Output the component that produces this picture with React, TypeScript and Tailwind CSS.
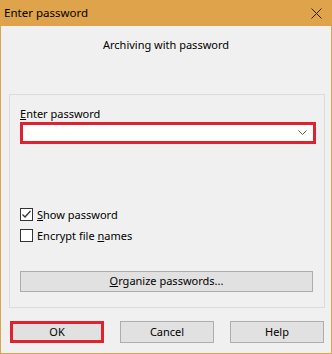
import React from 'react';

const font = 'font-["Segoe_UI","Noto_Sans","Liberation_Sans",sans-serif]';

const CheckRow = ({ checked, children }: { checked?: boolean; children: React.ReactNode }) => (
  <div className="flex items-center h-[13px]">
    <div className="w-[13px] h-[13px] border border-[#333333] bg-white flex items-center justify-center">
      {checked && (
        <svg width="11" height="11" viewBox="0 0 11 11">
          <path d="M1.5 5.5 L4 8 L9.5 2" fill="none" stroke="#333333" strokeWidth="1.3" />
        </svg>
      )}
    </div>
    <span className="ml-[4px] text-[11px] leading-[16px] text-black">{children}</span>
  </div>
);

const Btn = ({ children, red }: { children: React.ReactNode; red?: boolean }) => (
  <div
    className={`w-[94px] h-[22px] flex items-center justify-center bg-[#e1e1e1] text-[11px] text-black ${
      red ? 'border-[3px] border-[#e0212f]' : 'border border-[#adadad]'
    }`}
  >
    {children}
  </div>
);

export default function App() {
  return (
    <div className={`w-[332px] h-[354px] flex flex-col ${font}`}>
      {/* Title bar */}
      <div className="h-[26px] bg-[#dea34b] flex items-center justify-between pl-[4px] pr-[10px]">
        <span className="text-[11.5px] text-black leading-[16px]">Enter password</span>
        <svg width="11" height="11" viewBox="0 0 11 11">
          <path d="M0.5 0.5 L10.5 10.5 M10.5 0.5 L0.5 10.5" stroke="#222222" strokeWidth="1" />
        </svg>
      </div>

      {/* Body */}
      <div className="flex-1 bg-[#f0f0f0] border-x border-b border-[#dea34b] flex flex-col">
        <div className="pt-[11px] text-center text-[11px] leading-[16px] text-black">Archiving with password</div>

        {/* Group box */}
        <div className="mt-[41px] ml-[8px] w-[316px] h-[214px] border border-[#dcdcdc] flex flex-col pl-[10px] pr-[8px]">
          <div className="mt-[11px] text-[11px] leading-[16px] text-black">
            <u>E</u>nter password
          </div>
          <div className="w-[296px] h-[22px] border-[3px] border-[#e0212f] bg-white flex items-center justify-end pr-[6px]">
            <svg width="9" height="6" viewBox="0 0 9 6">
              <path d="M0.5 0.5 L4.5 4.5 L8.5 0.5" fill="none" stroke="#555555" strokeWidth="1" />
            </svg>
          </div>

          <div className="mt-[64px] flex flex-col gap-[8px]">
            <CheckRow checked>
              <u>S</u>how password
            </CheckRow>
            <CheckRow>
              Encrypt file <u>n</u>ames
            </CheckRow>
          </div>

          <div className="mt-[29px] w-[293px] h-[21px] bg-[#e1e1e1] border border-[#adadad] flex items-center justify-center text-[11px] text-black">
            <span>
              <u>O</u>rganize passwords...
            </span>
          </div>
        </div>

        {/* Bottom buttons */}
        <div className="mt-[13px] ml-[9px] w-[314px] flex justify-between">
          <Btn red>OK</Btn>
          <Btn>Cancel</Btn>
          <Btn>Help</Btn>
        </div>
      </div>
    </div>
  );
}
